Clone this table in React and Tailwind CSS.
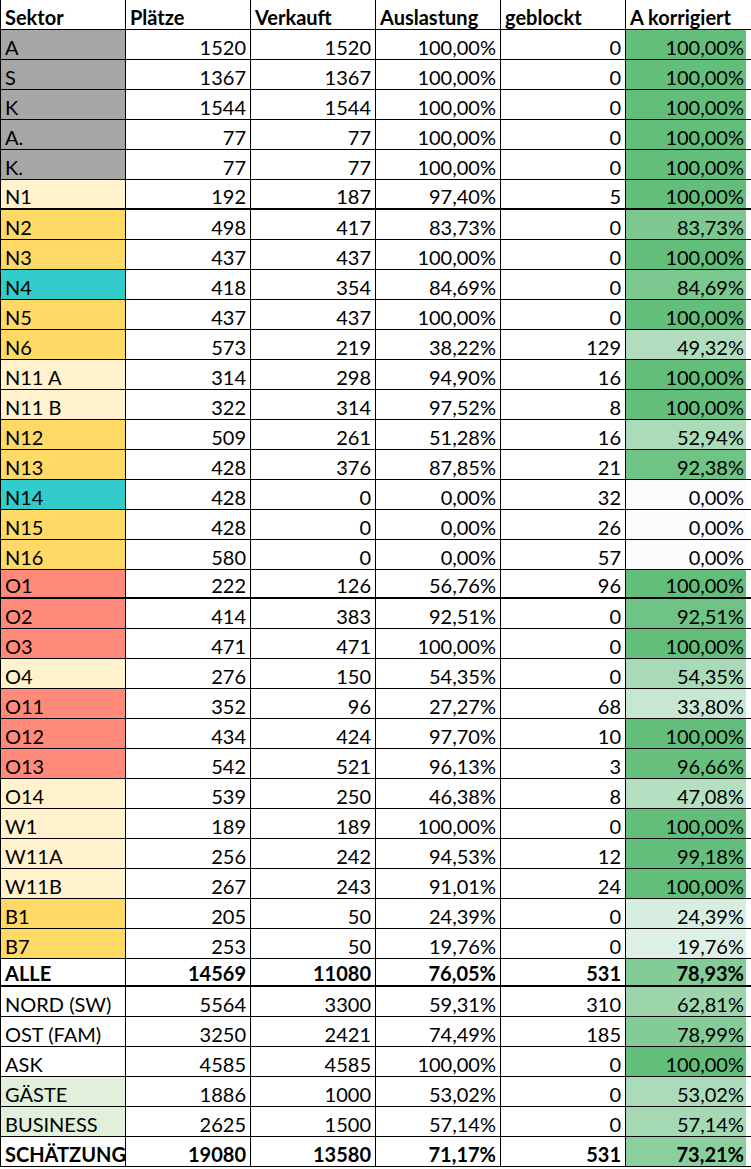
// Auslastung pro Sektor – Tabelle im Excel-Stil

const GRAY = 'bg-[#a6a6a6]';
const PALE = 'bg-[#fff2cc]';
const GOLD = 'bg-[#ffd966]';
const TEAL = 'bg-[#33cccc]';
const SALMON = 'bg-[#ff8a7a]';
const MINT = 'bg-[#e2efda]';

const rows = [
  ['A', 1520, 1520, '100,00%', 0, '100,00%', GRAY],
  ['S', 1367, 1367, '100,00%', 0, '100,00%', GRAY],
  ['K', 1544, 1544, '100,00%', 0, '100,00%', GRAY],
  ['A.', 77, 77, '100,00%', 0, '100,00%', GRAY],
  ['K.', 77, 77, '100,00%', 0, '100,00%', GRAY],
  ['N1', 192, 187, '97,40%', 5, '100,00%', PALE, 'thick'],
  ['N2', 498, 417, '83,73%', 0, '83,73%', GOLD],
  ['N3', 437, 437, '100,00%', 0, '100,00%', GOLD],
  ['N4', 418, 354, '84,69%', 0, '84,69%', TEAL],
  ['N5', 437, 437, '100,00%', 0, '100,00%', GOLD],
  ['N6', 573, 219, '38,22%', 129, '49,32%', GOLD],
  ['N11 A', 314, 298, '94,90%', 16, '100,00%', PALE],
  ['N11 B', 322, 314, '97,52%', 8, '100,00%', PALE],
  ['N12', 509, 261, '51,28%', 16, '52,94%', GOLD],
  ['N13', 428, 376, '87,85%', 21, '92,38%', GOLD],
  ['N14', 428, 0, '0,00%', 32, '0,00%', TEAL],
  ['N15', 428, 0, '0,00%', 26, '0,00%', GOLD],
  ['N16', 580, 0, '0,00%', 57, '0,00%', GOLD],
  ['O1', 222, 126, '56,76%', 96, '100,00%', SALMON, 'thick29'],
  ['O2', 414, 383, '92,51%', 0, '92,51%', SALMON],
  ['O3', 471, 471, '100,00%', 0, '100,00%', SALMON],
  ['O4', 276, 150, '54,35%', 0, '54,35%', PALE],
  ['O11', 352, 96, '27,27%', 68, '33,80%', SALMON],
  ['O12', 434, 424, '97,70%', 10, '100,00%', SALMON],
  ['O13', 542, 521, '96,13%', 3, '96,66%', SALMON],
  ['O14', 539, 250, '46,38%', 8, '47,08%', PALE],
  ['W1', 189, 189, '100,00%', 0, '100,00%', PALE],
  ['W11A', 256, 242, '94,53%', 12, '99,18%', PALE],
  ['W11B', 267, 243, '91,01%', 24, '100,00%', PALE],
  ['B1', 205, 50, '24,39%', 0, '24,39%', GOLD],
  ['B7', 253, 50, '19,76%', 0, '19,76%', GOLD],
  ['ALLE', 14569, 11080, '76,05%', 531, '78,93%', '', 'total'],
  ['NORD (SW)', 5564, 3300, '59,31%', 310, '62,81%', ''],
  ['OST (FAM)', 3250, 2421, '74,49%', 185, '78,99%', ''],
  ['ASK', 4585, 4585, '100,00%', 0, '100,00%', ''],
  ['GÄSTE', 1886, 1000, '53,02%', 0, '53,02%', MINT],
  ['BUSINESS', 2625, 1500, '57,14%', 0, '57,14%', MINT],
  ['SCHÄTZUNG', 19080, 13580, '71,17%', 531, '73,21%', '', 'bold'],
];

// Farbskala wie in Excel: 0 % = fast weiß, 100 % = grün
const scale = (pct) => {
  const v = parseFloat(pct.replace(',', '.')) / 100;
  const mix = (a, b) => Math.round(a + (b - a) * v);
  return `rgb(${mix(252, 99)}, ${mix(252, 190)}, ${mix(255, 123)})`;
};

const cell = 'flex items-end h-full border-r border-black leading-[23px]';

const App = () => {
  return (
    <div className="w-[751px] bg-white text-black font-['Lato','Noto_Sans',sans-serif] text-[20px]">
      <div className="border-l border-black">
        {/* Kopfzeile */}
        <div className="flex h-[30px] border-b border-black font-bold">
          {['Sektor', 'Plätze', 'Verkauft', 'Auslastung', 'geblockt'].map((h) => (
            <div key={h} className={`${cell} w-[125px] pl-[4px]`}>
              {h}
            </div>
          ))}
          <div className="flex items-end h-full leading-[23px] w-[120px] pl-[4px]">A korrigiert</div>
        </div>

        {rows.map(([name, seats, sold, load, blocked, corr, bg, kind]) => {
          const bold = kind === 'total' || kind === 'bold';
          let rowCls = 'h-[30px] border-b';
          if (kind === 'thick') rowCls = 'h-[30px] border-b-2';
          if (kind === 'thick29') rowCls = 'h-[29px] border-b-2';
          if (kind === 'total') rowCls = 'h-[28px] border-b-2';
          return (
            <div
              key={name}
              className={`flex border-black ${rowCls} ${bold ? 'font-bold' : ''}`}
            >
              <div className={`${cell} w-[125px] pl-[4px] ${bg}`}>{name}</div>
              <div className={`${cell} w-[125px] justify-end pr-[4px]`}>{seats}</div>
              <div className={`${cell} w-[125px] justify-end pr-[4px]`}>{sold}</div>
              <div className={`${cell} w-[125px] justify-end pr-[4px]`}>{load}</div>
              <div className={`${cell} w-[125px] justify-end pr-[4px]`}>{blocked}</div>
              <div
                className="flex items-end justify-end h-full leading-[23px] w-[120px] pr-[2px]"
                style={{ backgroundColor: scale(corr) }}
              >
                {corr}
              </div>
            </div>
          );
        })}
      </div>
    </div>
  );
};

export default App;
